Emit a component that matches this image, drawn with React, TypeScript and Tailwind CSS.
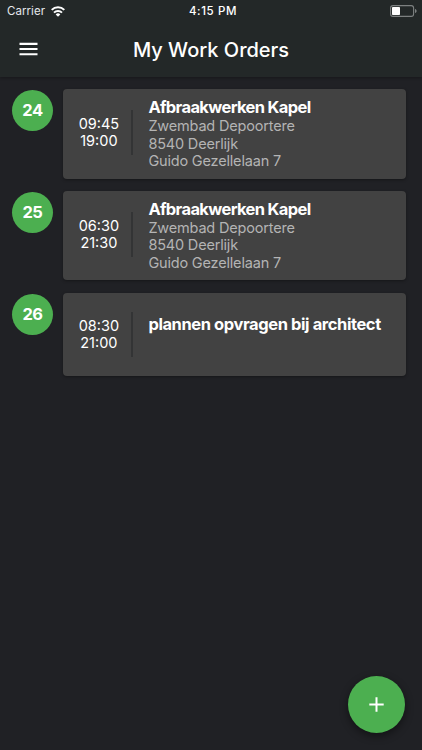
interface WorkOrder {
  day: number;
  start: string;
  end: string;
  title: string;
  details: string[];
}

const WORK_ORDERS: WorkOrder[] = [
  {
    day: 24,
    start: "09:45",
    end: "19:00",
    title: "Afbraakwerken Kapel",
    details: ["Zwembad Depoortere", "8540 Deerlijk", "Guido Gezellelaan 7"],
  },
  {
    day: 25,
    start: "06:30",
    end: "21:30",
    title: "Afbraakwerken Kapel",
    details: ["Zwembad Depoortere", "8540 Deerlijk", "Guido Gezellelaan 7"],
  },
  {
    day: 26,
    start: "08:30",
    end: "21:00",
    title: "plannen opvragen bij architect",
    details: [],
  },
];

function WifiIcon() {
  return (
    <svg width="14" height="11" viewBox="0 0 14 11" fill="none" stroke="#fff" strokeWidth="2">
      <path d="M0.7 3.9a9 9 0 0 1 12.6 0" />
      <path d="M3 6.6a5.7 5.7 0 0 1 8 0" />
      <path d="M7 10.7L4.7 8.4a3.2 3.2 0 0 1 4.6 0z" fill="#fff" stroke="none" />
    </svg>
  );
}

function BatteryIcon() {
  return (
    <svg width="27" height="12" viewBox="0 0 27 12" fill="none">
      <rect x="0.6" y="0.6" width="23" height="10.8" rx="2.4" stroke="#7d8181" strokeWidth="1.1" />
      <rect x="2" y="2" width="8" height="8" rx="0.8" fill="#fff" />
      <path d="M25 4v4c1-.4 1.6-1.1 1.6-2S26 4.4 25 4z" fill="#7d8181" />
    </svg>
  );
}

function StatusBar() {
  return (
    <div className="grid h-[22px] grid-cols-3 items-center pr-[5px] pl-[7px] text-[11.5px] text-white">
      <div className="flex items-center gap-[6px]">
        <span className="pt-[2px] tracking-[0.05px] text-gray-200">Carrier</span>
        <WifiIcon />
      </div>
      <span className="pt-[2px] pl-[2px] text-center font-medium tracking-[0.6px]">4:15 PM</span>
      <div className="flex justify-end">
        <BatteryIcon />
      </div>
    </div>
  );
}

function Header() {
  return (
    <header className="h-[77px] bg-[#232828] shadow-[0_1px_3px_rgba(0,0,0,0.3)]">
      <StatusBar />
      <div className="grid h-[55px] grid-cols-[60px_1fr_60px] items-center">
        <button className="mb-px ml-[19px] h-[14px] w-[19px]" aria-label="Menu">
          <svg width="19" height="14" viewBox="0 0 19 14" fill="#fff">
            <path d="M0.5 0.8h18v2.1h-18zM0.5 6h18v2.1h-18zM0.5 11.2h18v2.1h-18z" />
          </svg>
        </button>
        <h1 className="text-center text-[20px] font-medium text-white">My Work Orders</h1>
      </div>
    </header>
  );
}

function WorkOrderRow({ order }: { order: WorkOrder }) {
  const compact = order.details.length === 0;

  return (
    <li className="flex items-start">
      <div className="mt-px flex h-[41px] w-[41px] shrink-0 items-center justify-center rounded-full bg-[#4caf50] pr-px text-[16.5px] font-bold tracking-[-0.6px] text-white">
        {order.day}
      </div>
      <div
        className={`ml-[10px] flex w-[343px] items-center rounded-[4px] bg-[#424242] shadow-[0_1px_3px_rgba(0,0,0,0.35)] ${
          compact ? "h-[83.4px]" : "h-[89.5px]"
        }`}
      >
        <div
          className={`flex h-[45px] w-[70px] shrink-0 flex-col justify-center border-r-2 border-[#333435] pl-[3px] text-center text-[14.5px] leading-[17.4px] text-white ${
            compact ? "" : "mb-[3px]"
          }`}
        >
          <span>{order.start}</span>
          <span>{order.end}</span>
        </div>
        <div className={`pl-[15px] whitespace-nowrap ${compact ? "pb-[19px]" : ""}`}>
          <h2
            className={`text-[16.5px] leading-[19px] font-bold text-white ${
              compact ? "tracking-[-0.41px]" : "tracking-[-0.64px]"
            }`}
          >
            {order.title}
          </h2>
          {order.details.map((line) => (
            <p key={line} className="text-[14.5px] leading-[17.3px] tracking-[-0.18px] text-[#b4b4b4]">
              {line}
            </p>
          ))}
        </div>
      </div>
    </li>
  );
}

export default function App() {
  return (
    <div className="relative h-[750px] w-[422px] overflow-hidden bg-[#202125] font-['Inter','Liberation_Sans',sans-serif]">
      <Header />
      <ul className="flex flex-col gap-[12.3px] pt-3 pl-[12.4px]">
        {WORK_ORDERS.map((order) => (
          <WorkOrderRow key={order.day} order={order} />
        ))}
      </ul>
      <button
        className="absolute right-[17px] bottom-[17px] flex h-[57px] w-[57px] items-center justify-center rounded-full bg-[#4caf50] shadow-[0_3px_8px_rgba(0,0,0,0.45)]"
        aria-label="Add work order"
      >
        <svg width="15" height="15" viewBox="0 0 15 15" fill="#fff">
          <path d="M6.5 0.3h2v6.2h6.2v2H8.5v6.2h-2V8.5H0.3v-2h6.2z" />
        </svg>
      </button>
    </div>
  );
}
